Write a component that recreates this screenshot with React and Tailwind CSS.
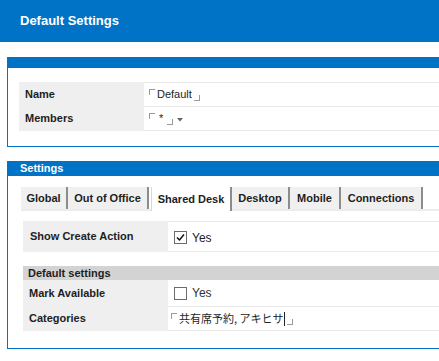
import React from "react";

const OpenMark = () => (
  <span className="inline-block w-[6px] h-[6px] mr-[2px] self-start mt-[6px] border-l border-t border-[#9a9a9a]" />
);
const CloseMark = () => (
  <span className="inline-block w-[6px] h-[6px] ml-[2px] self-end mb-[5px] border-r border-b border-[#9a9a9a]" />
);

const Checkbox = ({ checked }) => (
  <span className="inline-flex items-center justify-center w-[13px] h-[13px] border border-[#6b6b6b] bg-white">
    {checked && (
      <svg width="9" height="9" viewBox="0 0 9 9">
        <path d="M1 4.5 L3.5 7 L8 1.5" fill="none" stroke="#111" strokeWidth="1.5" />
      </svg>
    )}
  </span>
);

const tabs = [
  { name: "Global", w: "w-[47px]" },
  { name: "Out of Office", w: "w-[81px]" },
  { name: "Shared Desk", w: "w-[81px]", active: true },
  { name: "Desktop", w: "w-[58px]" },
  { name: "Mobile", w: "w-[51px]" },
  { name: "Connections", w: "w-[82px]" },
];

const App = () => {
  return (
    <div className="w-[439px] h-[361px] overflow-hidden bg-white font-['Liberation_Sans',Arial,sans-serif] text-[11px] text-[#1e1e1e]">
      <div className="h-[42px] bg-[#0073c6] pl-[20px] flex items-center text-white font-bold text-[13px]">
        Default Settings
      </div>

      {/* general */}
      <div className="ml-[7px] mt-[15px] w-[480px] border-l border-b border-[#0073c6]">
        <div className="h-[11px] bg-[#0073c6]" />
        <div className="pt-[14px] pb-[15px] pl-[11px]">
          <div className="flex h-[24px]">
            <div className="w-[125px] bg-[#efefef] pl-[6px] flex items-center font-bold">Name</div>
            <div className="flex-1 border-t border-[#ebebeb] pl-[5px] flex items-center">
              <OpenMark />
              <span>Default</span>
              <CloseMark />
            </div>
          </div>
          <div className="flex h-[25px]">
            <div className="w-[125px] bg-[#efefef] pl-[6px] flex items-center font-bold">Members</div>
            <div className="flex-1 border-t border-b border-[#ebebeb] pl-[5px] flex items-center">
              <OpenMark />
              <span className="mx-[2px]">*</span>
              <CloseMark />
              <svg width="6" height="4" viewBox="0 0 6 4" className="ml-[4px] mt-[2px]">
                <path d="M0 0 H6 L3 3.5 Z" fill="#666" />
              </svg>
            </div>
          </div>
        </div>
      </div>

      {/* settings */}
      <div className="ml-[7px] mt-[14px] w-[480px] border-l border-b border-[#0073c6]">
        <div className="h-[15px] bg-[#0073c6] pl-[12px] flex items-center text-white font-bold">
          Settings
        </div>
        <div className="pt-[11px] pl-[13px]">
          <div className="flex items-end h-[24px] border-b-2 border-[#ececec]">
            {tabs.map((t) =>
              t.active ? (
                <div
                  key={t.name}
                  className={`${t.w} h-[24px] -mb-[2px] ml-[2px] bg-white border-l border-[#d8d8d8] border-r-2 border-r-[#8c8c8c] flex items-center justify-center font-bold`}
                >
                  {t.name}
                </div>
              ) : (
                <div
                  key={t.name}
                  className={`${t.w} h-[22px] bg-[#f0f0f0] border-r-2 border-r-[#8c8c8c] flex items-center justify-center font-bold`}
                >
                  {t.name}
                </div>
              )
            )}
          </div>
        </div>

        <div className="pt-[10px] pb-[17px] pl-[15px]">
          <div className="flex h-[31px]">
            <div className="w-[145px] bg-[#efefef] pl-[7px] flex items-center font-bold">Show Create Action</div>
            <div className="flex-1 border-t border-b border-[#ebebeb] pl-[6px] flex items-center gap-[5px] pt-[2px]">
              <Checkbox checked />
              <span className="text-[12px]">Yes</span>
            </div>
          </div>

          <div className="mt-[14px] h-[14px] bg-[#d3d3d3] pl-[5px] flex items-center font-bold">
            Default settings
          </div>
          <div className="flex h-[26px]">
            <div className="w-[145px] bg-[#efefef] pl-[6px] flex items-center font-bold">Mark Available</div>
            <div className="flex-1 pl-[6px] flex items-center gap-[5px]">
              <Checkbox />
              <span className="text-[#333] text-[12px]">Yes</span>
            </div>
          </div>
          <div className="flex h-[25px]">
            <div className="w-[145px] bg-[#efefef] pl-[6px] flex items-center font-bold">Categories</div>
            <div className="flex-1 border-t border-b border-[#ebebeb] pl-[3px] flex items-center text-[11px] font-['Noto_Sans_CJK_JP','Liberation_Sans',sans-serif]">
              <OpenMark />
              <span>共有席予約, アキヒサ</span>
              <span className="inline-block w-px h-[14px] bg-[#222]" />
              <CloseMark />
            </div>
          </div>
        </div>
      </div>
    </div>
  );
};

export default App;
